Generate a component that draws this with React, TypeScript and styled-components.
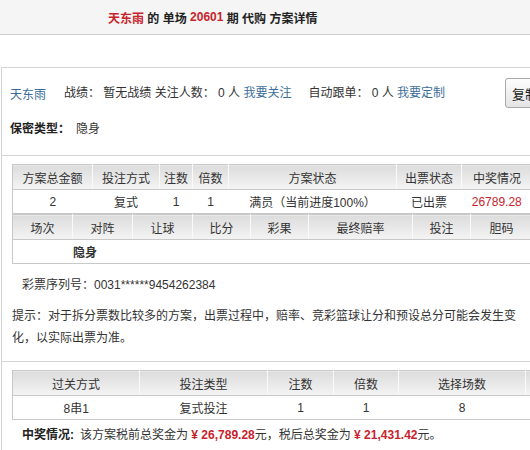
import React from 'react';
import styled, { createGlobalStyle } from 'styled-components';

const GlobalStyle = createGlobalStyle`
  html, body {
    margin: 0;
    padding: 0;
    background: #fff;
    overflow: hidden;
  }
  body {
    font-family: "Liberation Sans", "Noto Sans CJK SC", sans-serif;
    font-size: 12px;
    color: #333;
  }
`;

const Page = styled.div`
  width: 530px;
  overflow: hidden;
`;

const TitleBar = styled.div`
  height: 34px;
  background: #f5f5f5;
  border-bottom: 1px solid #cfcfcf;
  display: flex;
  align-items: center;
  padding-left: 108px;
  font-size: 12px;
  font-weight: bold;
  color: #222;
  white-space: pre;
`;

const Red = styled.span`
  color: #c8232c;
`;

const Body = styled.div`
  margin-top: 32px;
  margin-left: 1px;
  width: 620px;
`;

const Section = styled.div<{ $pt: number; $pb: number }>`
  border-top: 1px solid #d4d4d4;
  border-left: 1px solid #d4d4d4;
  padding: ${(p) => p.$pt}px 0 ${(p) => p.$pb}px 0;
`;

const InfoRow = styled.div`
  display: flex;
  align-items: center;
  height: 30px;
  padding-left: 8px;
  white-space: nowrap;
`;

const InfoText = styled.span<{ $gap: number }>`
  margin-left: ${(p) => p.$gap}px;
  padding-bottom: 3px;
`;

const Link = styled.a`
  color: #3b6e9a;
  text-decoration: none;
`;

const CopyButton = styled.button`
  margin-left: auto;
  margin-right: 46px;
  width: 70px;
  height: 30px;
  padding: 0 0 0 6px;
  text-align: left;
  border: 1px solid #a9a9a9;
  border-radius: 3px;
  background: linear-gradient(#fdfdfd, #e4e4e4);
  font-family: "Liberation Sans", "Noto Sans CJK SC", sans-serif;
  font-size: 13px;
  color: #222;
  white-space: nowrap;
`;

const SecretRow = styled.div`
  margin-top: 12px;
  line-height: 18px;
  padding-left: 8px;
`;

const Label = styled.b`
  color: #222;
  margin-right: 6px;
`;

const Grid = styled.table<{ $w: number }>`
  width: ${(p) => p.$w}px;
  margin-left: 10px;
  border-collapse: collapse;
  table-layout: fixed;
  border-left: 1px solid #c8c8c8;
  border-right: 1px solid #c8c8c8;

  th {
    height: 24px;
    padding: 0;
    font-weight: normal;
    color: #333;
    background: linear-gradient(#dcdcdc, #f4f4f4);
    border-top: 1px solid #c8c8c8;
    border-bottom: 1px solid #c8c8c8;
    border-right: 1px solid #fafafa;
    text-align: center;
  }

  td {
    height: 23px;
    padding: 0;
    text-align: center;
    border-bottom: 1px solid #c8c8c8;
    color: #333;
  }
`;

const Hidden = styled.td`
  && {
    text-align: left;
    padding-left: 60px;
    font-weight: bold;
  }
`;

const Serial = styled.div`
  margin-top: 10px;
  padding-left: 20px;
  line-height: 22px;
`;

const Hint = styled.div`
  margin-top: 9px;
  padding-left: 10px;
  width: 505px;
  line-height: 22px;
`;

const PrizeLine = styled.div`
  margin-top: 5px;
  padding-left: 20px;
  line-height: 20px;
  white-space: nowrap;
`;

const Yen = styled.span`
  color: #c8232c;
  font-weight: bold;
`;

const planCols = [80, 67, 33, 36, 168, 65, 71];
const matchCols = [60, 60, 60, 58, 58, 104, 58, 62];
const passCols = [127, 128, 66, 65, 127, 80];

const Cols = ({ widths }: { widths: number[] }) => (
  <colgroup>
    {widths.map((w, i) => (
      <col key={i} style={{ width: w }} />
    ))}
  </colgroup>
);

export default function App() {
  return (
    <Page>
      <GlobalStyle />
      <TitleBar>
        <Red>天东雨</Red> 的 单场 <Red>20601</Red> 期 代购 方案详情
      </TitleBar>
      <Body>
        <Section $pt={10} $pb={17}>
          <InfoRow>
            <Link href="#">天东雨</Link>
            <InfoText $gap={18}>
              战绩： 暂无战绩 关注人数： 0 人 <Link href="#">我要关注</Link>
            </InfoText>
            <InfoText $gap={17}>
              自动跟单： 0 人 <Link href="#">我要定制</Link>
            </InfoText>
            <CopyButton>复制方案</CopyButton>
          </InfoRow>
          <SecretRow>
            <Label>保密类型：</Label>隐身
          </SecretRow>
        </Section>

        <Section $pt={8} $pb={12}>
          <Grid $w={520}>
            <Cols widths={planCols} />
            <thead>
              <tr>
                <th>方案总金额</th>
                <th>投注方式</th>
                <th>注数</th>
                <th>倍数</th>
                <th>方案状态</th>
                <th>出票状态</th>
                <th>中奖情况</th>
              </tr>
            </thead>
            <tbody>
              <tr>
                <td>2</td>
                <td>复式</td>
                <td>1</td>
                <td>1</td>
                <td>满员（当前进度100%）</td>
                <td>已出票</td>
                <td>
                  <Red>26789.28</Red>
                </td>
              </tr>
            </tbody>
          </Grid>
          <Grid $w={520}>
            <Cols widths={matchCols} />
            <thead>
              <tr>
                <th>场次</th>
                <th>对阵</th>
                <th>让球</th>
                <th>比分</th>
                <th>彩果</th>
                <th>最终赔率</th>
                <th>投注</th>
                <th>胆码</th>
              </tr>
            </thead>
            <tbody>
              <tr>
                <Hidden colSpan={8}>隐身</Hidden>
              </tr>
            </tbody>
          </Grid>
          <Serial>彩票序列号：0031******9454262384</Serial>
          <Hint>
            提示：对于拆分票数比较多的方案，出票过程中，赔率、竞彩篮球让分和预设总分可能会发生变化，以实际出票为准。
          </Hint>
        </Section>

        <Section $pt={8} $pb={10}>
          <Grid $w={593}>
            <Cols widths={passCols} />
            <thead>
              <tr>
                <th>过关方式</th>
                <th>投注类型</th>
                <th>注数</th>
                <th>倍数</th>
                <th>选择场数</th>
                <th></th>
              </tr>
            </thead>
            <tbody>
              <tr>
                <td>8串1</td>
                <td>复式投注</td>
                <td>1</td>
                <td>1</td>
                <td>8</td>
                <td></td>
              </tr>
            </tbody>
          </Grid>
          <PrizeLine>
            <Label>中奖情况:</Label>该方案税前总奖金为 <Yen>¥ 26,789.28</Yen>元，税后总奖金为 <Yen>¥ 21,431.42</Yen>元。
          </PrizeLine>
        </Section>
      </Body>
    </Page>
  );
}
